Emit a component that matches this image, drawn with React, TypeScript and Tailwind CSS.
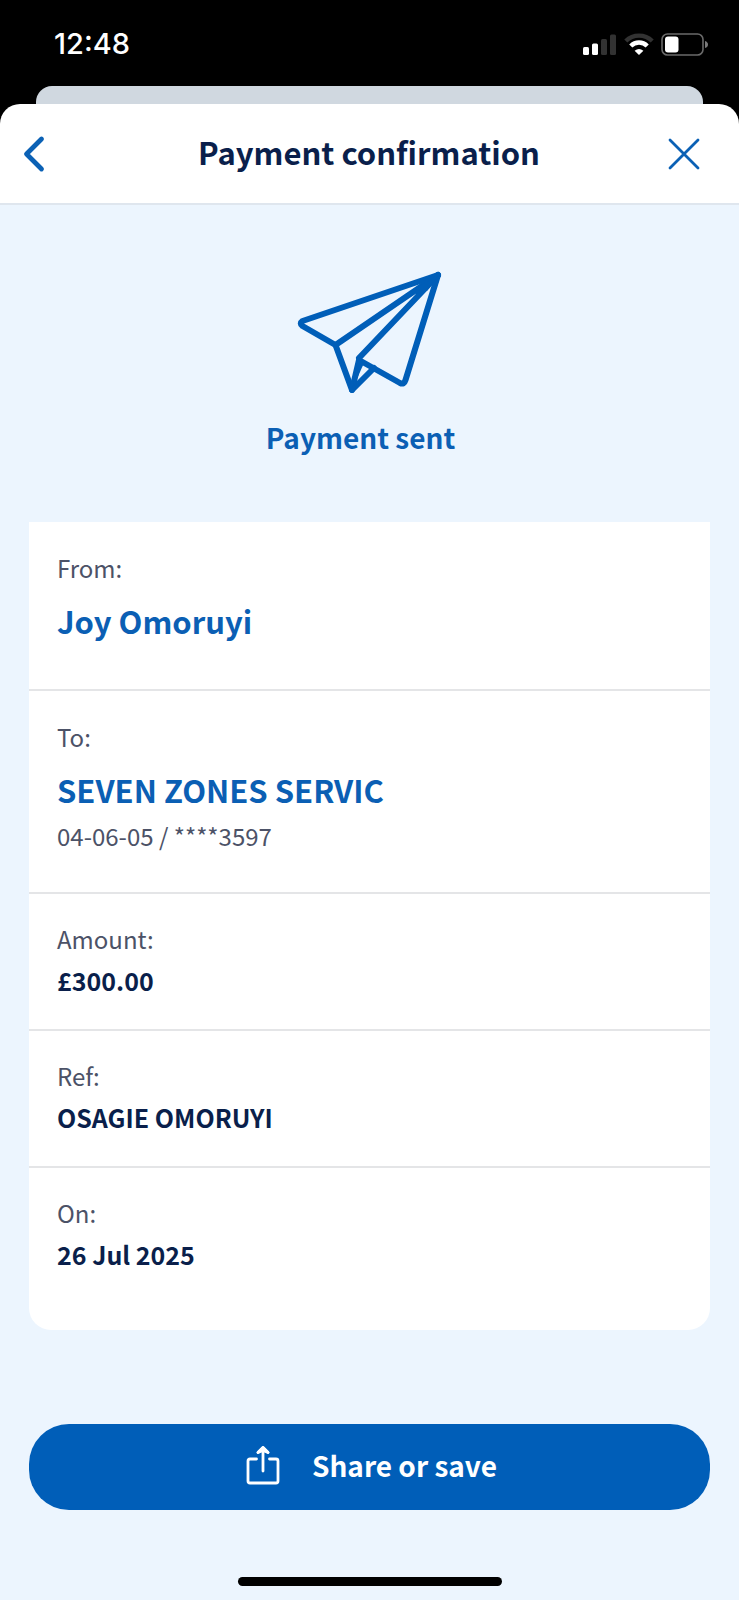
type Row = {
  label: string;
  value: string;
  detail?: string;
  kind: "party" | "plain";
};

const rows: Row[] = [
  { label: "From:", value: "Joy Omoruyi", kind: "party" },
  { label: "To:", value: "SEVEN ZONES SERVIC", detail: "04-06-05 / ****3597", kind: "party" },
  { label: "Amount:", value: "£300.00", kind: "plain" },
  { label: "Ref:", value: "OSAGIE OMORUYI", kind: "plain" },
  { label: "On:", value: "26 Jul 2025", kind: "plain" },
];

function StatusBar() {
  return (
    <div className="flex h-[86px] items-center justify-between pt-[2px] pr-[30px] pl-[54px] text-white">
      <time className="font-['Inter','Liberation_Sans',sans-serif] text-[29px] leading-8 font-medium">
        12:48
      </time>
      <svg width="128" height="24" viewBox="0 0 128 24" role="img" aria-label="Signal, Wi-Fi and battery">
        <rect x="2" y="15" width="6" height="8" rx="1.5" fill="#fff" />
        <rect x="11" y="11.5" width="6" height="11.5" rx="1.5" fill="#fff" />
        <rect x="20" y="7" width="6" height="16" rx="1.5" fill="#323232" />
        <rect x="29" y="2.5" width="6" height="20.5" rx="1.5" fill="#323232" />
        <path d="M44.8 9 A19 19 0 0 1 71.2 9" fill="none" stroke="#323232" strokeWidth="4.4" />
        <path d="M49.8 14 A11.5 11.5 0 0 1 66.2 14" fill="none" stroke="#fff" strokeWidth="4.4" />
        <path d="M58 23 L53.6 18.8 Q58 15.4 62.4 18.8 Z" fill="#fff" />
        <rect x="81" y="2" width="41" height="21" rx="5.5" fill="none" stroke="#6a6a6a" strokeWidth="1.6" />
        <rect x="84" y="4.5" width="13.5" height="16" rx="3" fill="#fff" />
        <path d="M124 9 Q127 10 127 12.5 Q127 15 124 16 Z" fill="#7a7a7a" />
      </svg>
    </div>
  );
}

function Header() {
  return (
    <header className="grid h-[101px] grid-cols-[1fr_auto_1fr] items-center rounded-t-[20px] border-b-2 border-[#dfe6ee] bg-white pr-[37px] pl-5">
      <button type="button" aria-label="Back" className="flex size-7 items-center justify-center">
        <svg width="28" height="40" viewBox="0 0 28 40" className="shrink-0" fill="none" stroke="#0b61b5" strokeWidth="4.8" strokeLinecap="round" strokeLinejoin="round">
          <path d="M21.5 5 L6.5 20 L21.5 35" />
        </svg>
      </button>
      <h1 className="pb-1 pl-4 text-[31px] leading-12 font-bold text-[#0a1f4b]">Payment confirmation</h1>
      <button type="button" aria-label="Close" className="flex size-9 items-center justify-center justify-self-end">
        <svg width="36" height="36" viewBox="0 0 36 36" fill="none" stroke="#0b61b5" strokeWidth="2.8" strokeLinecap="round">
          <path d="M4 4 L32 32 M32 4 L4 32" />
        </svg>
      </button>
    </header>
  );
}

function PaperPlane() {
  return (
    <svg width="146" height="124" viewBox="0 0 146 124" aria-hidden="true" fill="none" stroke="#005eb8" strokeWidth="6" strokeLinejoin="round" strokeLinecap="round">
      <path d="M141 4 L5.5 50 Q2 52.5 5.5 55 L38.5 74 L55 119 L77 97" />
      <path d="M141 4 L108.5 109 Q107 114 103 112 L62 89 L55 119" />
      <path d="M141 4 L38.5 74 M141 4 L62 87" />
      <path d="M141 4 L118 18 L130 20 Z" fill="#005eb8" stroke="none" />
      <path d="M61 88 L55 119 L67 92 Z" fill="#005eb8" stroke="none" />
    </svg>
  );
}

function DetailRow({ row }: { row: Row }) {
  const party = row.kind === "party";
  return (
    <div
      className={
        party
          ? "border-b-2 border-[#e4e5e7] px-7 pt-7 pb-[38px] text-[24px] leading-9 first:pb-[44px]"
          : "border-b-2 border-[#e4e5e7] px-7 pt-[27px] pb-[31px] text-[24px] leading-9 last:border-b-0 last:pb-[58px]"
      }
    >
      <dt className="text-[#4c5267]">{row.label}</dt>
      <dd
        className={
          party
            ? "mt-[11px] text-[31px] leading-12 font-bold text-[#0b5fb4]"
            : "mt-[5px] text-[25px] font-bold text-[#0a1f4b]"
        }
      >
        {row.value}
      </dd>
      {row.detail && <dd className="mt-1 text-[#4c5267]">{row.detail}</dd>}
    </div>
  );
}

export default function App() {
  return (
    <div className="flex min-h-screen flex-col bg-black font-['Noto_Sans_CJK_SC',sans-serif]">
      <StatusBar />
      <div className="mx-9 h-[18px] rounded-t-[16px] bg-[#d0d8e0]" />
      <div className="flex grow flex-col">
        <Header />
        <main className="flex grow flex-col bg-[#ecf5fe] px-[29px] pt-[66px]">
          <div className="flex flex-col items-center">
            <PaperPlane />
            <p className="mt-[22px] mr-[18px] text-[28px] leading-10 font-bold text-[#0b5fb4]">Payment sent</p>
          </div>
          <dl className="mt-[65px] rounded-b-[22px] bg-white">
            {rows.map((row) => (
              <DetailRow key={row.label} row={row} />
            ))}
          </dl>
          <button
            type="button"
            className="mt-[94px] flex h-[86px] shrink-0 items-center justify-center gap-8 rounded-[40px] bg-[#005eb8] pb-1 pl-1 text-white"
          >
            <svg width="34" height="40" viewBox="0 0 34 40" aria-hidden="true" fill="none" stroke="#fff" strokeWidth="2.8" strokeLinecap="round" strokeLinejoin="round">
              <path d="M10.5 14 H4 Q2 14 2 16 V36 Q2 38 4 38 H30 Q32 38 32 36 V16 Q32 14 30 14 H23.5" />
              <path d="M17 26 V3 M12 7.5 L17 2.5 L22 7.5" />
              <path d="M12 7.5 L17 2.5 L22 7.5 L17 5.5 Z" fill="#fff" />
            </svg>
            <span className="text-[28px] leading-10 font-bold">Share or save</span>
          </button>
          <div className="mt-auto mb-[14px] h-[9px] w-[264px] self-center rounded-full bg-black" />
        </main>
      </div>
    </div>
  );
}
